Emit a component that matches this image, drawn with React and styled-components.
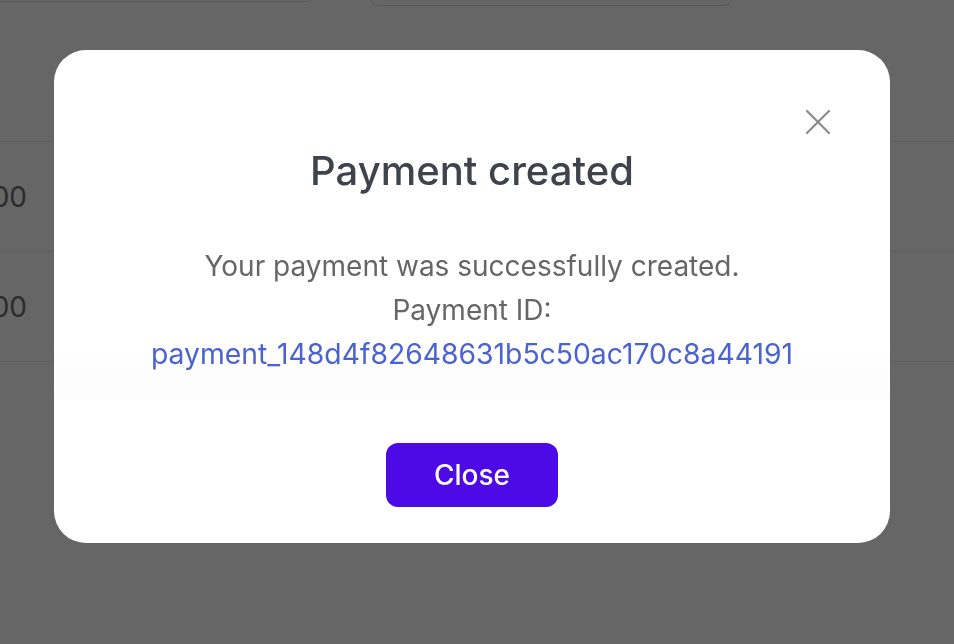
import React from "react";
import styled, { createGlobalStyle } from "styled-components";

const Global = createGlobalStyle`
  html, body { margin: 0; padding: 0; background: #ffffff; overflow: hidden; }
  body { font-family: Inter, "Noto Sans", "Liberation Sans", sans-serif; }
  * { box-sizing: border-box; }
`;

const Page = styled.div`
  width: 954px;
  height: 644px;
  background: #ffffff;
  overflow: hidden;
`;

const Toolbar = styled.div`
  height: 7px;
  display: flex;
  align-items: flex-end;
  gap: 55px;
  margin-left: -20px;
`;

const Field = styled.div`
  width: ${(p) => p.$w}px;
  height: 44px;
  flex: none;
  border: 1px solid #e2e2e2;
  border-radius: 8px;
  margin-bottom: ${(p) => p.$mb}px;
`;

const Table = styled.div`
  margin-top: 134px;
  border-top: 1px solid #ececec;
`;

const Row = styled.div`
  height: 110px;
  display: flex;
  align-items: center;
  border-bottom: 1px solid #ececec;
`;

const AmountCell = styled.div`
  width: 27px;
  overflow: hidden;
  display: flex;
  justify-content: flex-end;
  white-space: nowrap;
  font-size: 28px;
  color: #6e6e6e;
`;

const Overlay = styled.div`
  position: fixed;
  inset: 0;
  background: rgba(0, 0, 0, 0.6);
  display: flex;
  align-items: flex-start;
  padding: 50px 0 0 54px;
`;

const Modal = styled.div`
  position: relative;
  width: 836px;
  height: 493px;
  background: #ffffff;
  border-radius: 32px;
  display: flex;
  flex-direction: column;
  align-items: stretch;
  padding-top: 99px;
  overflow: hidden;
`;

const CloseIcon = styled.button`
  position: absolute;
  top: 57px;
  right: 57px;
  width: 30px;
  height: 30px;
  padding: 0;
  border: none;
  background: none;
  display: flex;
  align-items: center;
  justify-content: center;
  cursor: pointer;
`;

const Title = styled.h2`
  margin: 0 0 51px;
  text-align: center;
  font-size: 40px;
  line-height: 44px;
  font-weight: 500;
  color: #3f434c;
`;

const Body = styled.div`
  padding-bottom: 24px;
  text-align: center;
  font-size: 28px;
  line-height: 44px;
  color: #666666;
  background: linear-gradient(to bottom, #ffffff 0%, #ffffff 60%, #fcfcfc 100%);
`;

const Line = styled.div``;

const IdLink = styled.div`
  color: #4a63d0;
  font-size: 28.3px;
`;

const Footer = styled.div`
  display: flex;
  justify-content: center;
  padding-top: 43px;
`;

const PrimaryButton = styled.button`
  width: 172px;
  height: 64px;
  border: none;
  border-radius: 12px;
  background: #4d0ae6;
  color: #ffffff;
  font-family: Inter, "Noto Sans", "Liberation Sans", sans-serif;
  font-size: 28px;
  font-weight: 500;
  cursor: pointer;
`;

export default function App() {
  return (
    <>
      <Global />
      <Page>
        <Toolbar>
          <Field $w={335} $mb={5} />
          <Field $w={362} $mb={1} />
        </Toolbar>
        <Table>
          <Row>
            <AmountCell>1.000</AmountCell>
          </Row>
          <Row>
            <AmountCell>1.000</AmountCell>
          </Row>
        </Table>
      </Page>
      <Overlay>
        <Modal>
          <CloseIcon aria-label="Close">
            <svg width="30" height="30" viewBox="0 0 30 30" fill="none">
              <path d="M4 4L26 26M26 4L4 26" stroke="#8c8c8c" strokeWidth="2.2" strokeLinecap="round" />
            </svg>
          </CloseIcon>
          <Title>Payment created</Title>
          <Body>
            <Line>Your payment was successfully created.</Line>
            <Line>Payment ID:</Line>
            <IdLink>payment_148d4f82648631b5c50ac170c8a44191</IdLink>
          </Body>
          <Footer>
            <PrimaryButton>Close</PrimaryButton>
          </Footer>
        </Modal>
      </Overlay>
    </>
  );
}
